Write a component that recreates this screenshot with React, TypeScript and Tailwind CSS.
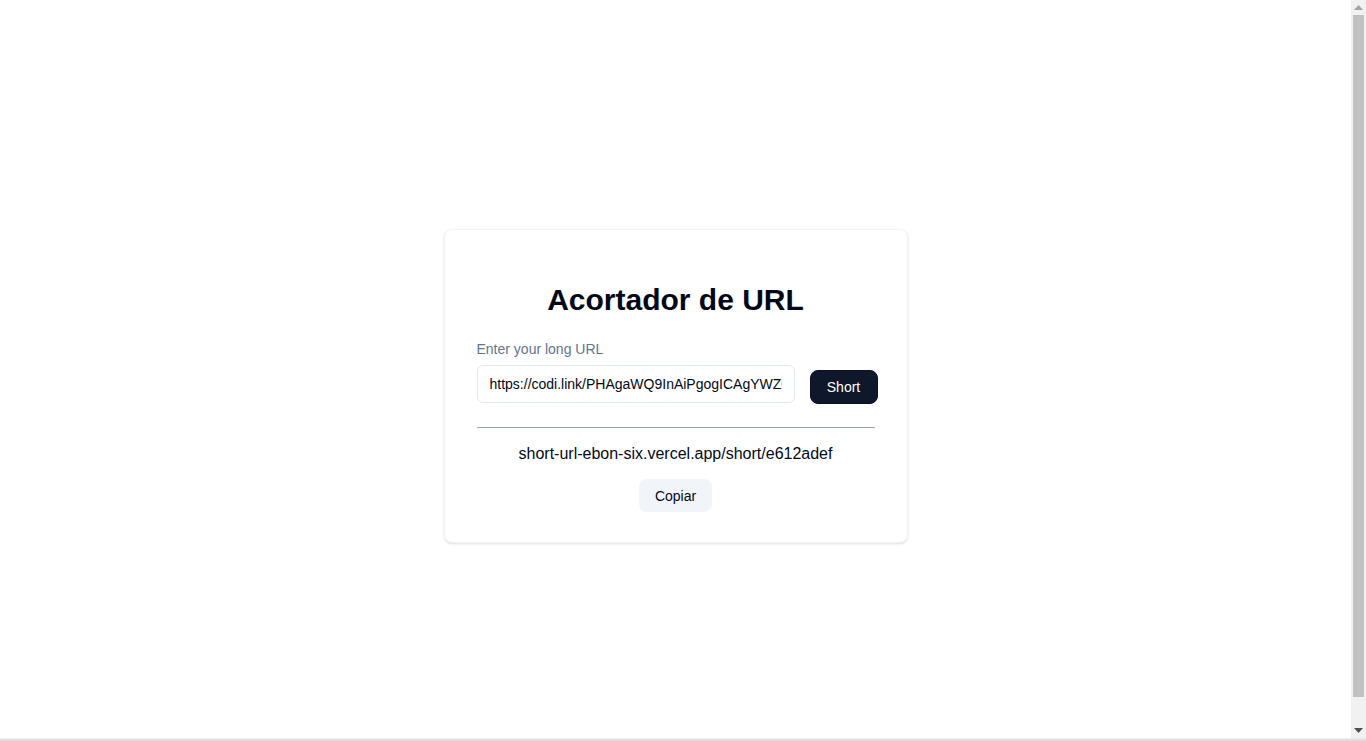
import React from "react";

function Scrollbar() {
  return (
    <div className="w-[15px] h-full bg-[#f1f1f1] flex flex-col items-center shrink-0">
      <div className="h-[15px] w-full flex items-center justify-center">
        <svg width="9" height="5" viewBox="0 0 9 5">
          <polygon points="0,5 9,5 4.5,0" fill="#a3a3a3" />
        </svg>
      </div>
      <div className="w-[11px] flex-1 bg-[#c1c1c1] mb-[26px]" />
      <div className="h-[15px] w-full flex items-center justify-center">
        <svg width="9" height="5" viewBox="0 0 9 5">
          <polygon points="0,0 9,0 4.5,5" fill="#505050" />
        </svg>
      </div>
    </div>
  );
}

export default function App() {
  return (
    <div
      className="h-screen flex flex-col bg-white overflow-hidden"
      style={{ fontFamily: '"Liberation Sans", Arial, sans-serif' }}
    >
      <div className="flex flex-1 min-h-0">
        <main className="flex-1 pt-[34px] flex items-center justify-center">
          <div className="w-[464px] rounded-lg border border-gray-100 bg-white shadow-sm px-8 pb-[30px] pt-[52px]">
            <h1 className="text-3xl font-bold text-center text-[#020817] leading-9">Acortador de URL</h1>
            <label className="block mt-[21px] text-sm leading-5 text-slate-500">Enter your long URL</label>
            <div className="mt-[6px] flex items-start gap-[15px]">
              <input
                className="shrink-0 w-[318px] h-[38px] rounded-md border border-slate-200 px-3 text-sm text-[#020817] outline-none"
                defaultValue="https://codi.link/PHAgaWQ9InAiPgogICAgYWZ0ZXIgeW91ciBjb250ZW50"
              />
              <button className="shrink-0 mt-[5px] h-[34px] w-[68px] rounded-lg bg-[#0f172a] text-sm text-white border border-[#0b1120]">
                Short
              </button>
            </div>
            <hr className="mt-[23px] border-t border-gray-400" />
            <p className="mt-[14px] text-center text-base leading-6 text-[#020817]">
              short-url-ebon-six.vercel.app/short/e612adef
            </p>
            <div className="mt-[13px] flex justify-center">
              <button className="h-[33px] px-4 rounded-lg bg-slate-100 text-sm text-[#020817]">Copiar</button>
            </div>
          </div>
        </main>
        <Scrollbar />
      </div>
      <div className="h-[3px] bg-gradient-to-b from-[#f0f0f0] to-[#d6d6d6]" />
    </div>
  );
}
